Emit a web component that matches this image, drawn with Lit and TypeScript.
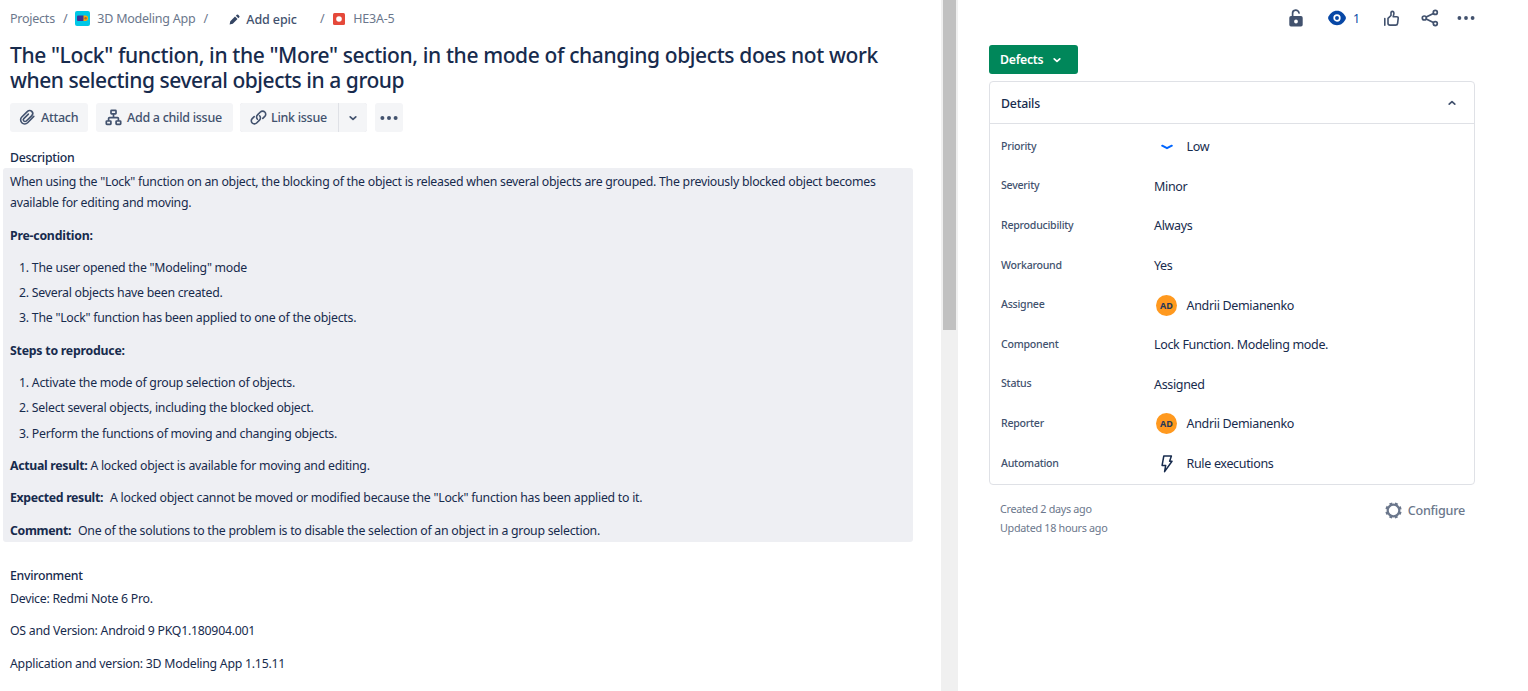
import { LitElement, html, css, svg } from "lit";
import { customElement } from "lit/decorators.js";

const chevronDown = html`<svg class="chev" viewBox="0 0 10 10"><path d="M2.2 3.8 5 6.4 7.8 3.8" /></svg>`;
const chevronUp = html`<svg class="chev" viewBox="0 0 10 10"><path d="M2.2 6.2 5 3.6 7.8 6.2" /></svg>`;
const dots = (r: number) => html`<svg width="18" height="6" viewBox="0 0 18 6" fill="currentColor">
  ${[2.4, 9, 15.6].map((x) => svg`<circle cx=${x} cy="3" r=${r} />`)}
</svg>`;

const avatar = html`<span class="avatar">AD</span>`;
const low = html`<svg width="12" height="6" viewBox="0 0 12 6" fill="none" stroke="#0065ff" stroke-width="2" stroke-linecap="round" stroke-linejoin="round"><path d="M1.2 1.7 6 4.2 10.8 1.7" /></svg>`;
const bolt = html`<svg width="14" height="20" viewBox="0 0 14 20" fill="none" stroke="#172b4d" stroke-width="1.5" stroke-linejoin="round"><path d="M3.8 2h7.6L9.6 7.3h2.4L4.6 17.6l1.1-6.2H2.1z" /></svg>`;

const rows: { label: string; icon?: unknown; value: string }[] = [
  { label: "Priority", icon: low, value: "Low" },
  { label: "Severity", value: "Minor" },
  { label: "Reproducibility", value: "Always" },
  { label: "Workaround", value: "Yes" },
  { label: "Assignee", icon: avatar, value: "Andrii Demianenko" },
  { label: "Component", value: "Lock Function. Modeling mode." },
  { label: "Status", value: "Assigned" },
  { label: "Reporter", icon: avatar, value: "Andrii Demianenko" },
  { label: "Automation", icon: bolt, value: "Rule executions" },
];

@customElement("app-root")
export class AppRoot extends LitElement {
  static styles = css`
    :host {
      display: flex;
      width: 1528px;
      height: 691px;
      overflow: hidden;
      background: #fff;
      color: #172b4d;
      font-family: "Noto Sans", "Open Sans", sans-serif;
      font-size: 12.3px;
      letter-spacing: -0.25px;
      white-space: nowrap;
    }
    * { box-sizing: border-box; }
    svg { display: block; flex: none; }
    .chev { width: 10px; height: 10px; fill: none; stroke: currentColor; stroke-width: 1.7; stroke-linecap: round; stroke-linejoin: round; }
    .main { width: 941px; padding-left: 10px; flex: none; }
    .crumbs { display: flex; align-items: center; height: 37px; color: #6b778c; font-size: 12.5px; letter-spacing: -0.24px; }
    .sep { margin: 0 8px 0 8px; }
    .app { margin: 0 7px 0 0; }
    .epic { display: flex; align-items: center; gap: 6px; margin: 2px 15px 0 13.5px; color: #42526e; font-weight: 500; letter-spacing: -0.1px; }
    .bug { margin: 0 8px 0 1px; }
    h1 { margin: 6px 0 10px; font-size: 21px; line-height: 25px; font-weight: 500; letter-spacing: -0.38px; }
    h1 .tail { letter-spacing: -0.46px; }
    .actions { display: flex; height: 29px; gap: 8px; color: #42526e; font-weight: 500; font-size: 12.5px; letter-spacing: -0.28px; }
    .btn { display: flex; align-items: center; gap: 5px; padding-left: 9px; border-radius: 3px; background: #f4f5f7; }
    .attach { width: 78px; }
    .child { width: 137px; }
    .split { display: flex; width: 127px; margin-left: -1px; background: #dfe1e6; border-radius: 3px; }
    .link { width: 98px; padding-left: 10px; gap: 4px; border-radius: 3px 0 0 3px; }
    .drop { width: 28px; margin-left: 1px; justify-content: center; padding: 0; border-radius: 0 3px 3px 0; }
    .more { width: 28px; padding: 0; justify-content: center; }
    h2 { margin: 15px 0 0; font-size: 12.3px; line-height: 21px; font-weight: 500; letter-spacing: -0.28px; }
    .desc { width: 910px; height: 374px; margin-left: -7px; padding: 3.3px 7px 0; background: #eeeff3; border-radius: 3px; line-height: 21px; }
    .desc p, .desc ol { margin: 0 0 11.4px; }
    .desc ol { padding: 0 0 0 9px; list-style: none; }
    .desc li { display: flex; gap: 3px; margin-bottom: 4.2px; }
    .desc li:last-child { margin-bottom: 0; }
    .desc b { font-weight: 700; letter-spacing: -0.22px; }
    .desc .wide { margin-right: 4px; letter-spacing: -0.33px; }
    .desc .actual { letter-spacing: -0.3px; }
    .env { margin-top: 23px; }
    .line { margin: 2px 0 11.4px; line-height: 21px; }
    .line + .line { margin-top: 0; }
    .track { width: 17px; flex: none; padding: 0 2px; background: #f0f0f0; }
    .thumb { height: 330px; background: #c1c1c1; }
    .side { width: 517px; padding-left: 31px; }
    .tools { display: flex; align-items: center; height: 37px; padding: 0 0 1px 298px; color: #42526e; }
    .watch { display: flex; align-items: center; gap: 7px; margin: 0 23px 0 23px; color: #0747a6; }
    .share { margin: 0 18px 0 21px; }
    .status { display: flex; align-items: center; gap: 9px; width: 89px; height: 29px; margin: 8px 0 7px; padding-left: 11px; border-radius: 3px; background: #00875a; color: #fff; font-weight: 600; font-size: 12.3px; }
    .card { width: 486px; height: 404px; border: 1px solid #dfe1e6; border-radius: 4px; }
    .head { display: flex; justify-content: space-between; align-items: center; height: 42px; padding: 1px 17px 0 11px; border-bottom: 1px solid #dfe1e6; font-weight: 500; letter-spacing: -0.2px; }
    .head .chev { color: #42526e; margin-bottom: 1px; }
    .rows { padding: 2.5px 0 0 11px; }
    .row { display: grid; grid-template-columns: 153px 1fr; align-items: center; height: 39.6px; }
    .label { padding-bottom: 0.8px; color: #42526e; font-size: 10.6px; font-weight: 500; letter-spacing: -0.25px; }
    .value { display: flex; align-items: center; padding-top: 1px; font-size: 12.5px; letter-spacing: -0.33px; }
    .ic { display: flex; justify-content: center; width: 25px; margin-right: 7.5px; }
    .avatar { display: flex; align-items: center; justify-content: center; width: 21px; height: 21px; border-radius: 50%; background: #ff991f; color: #253858; font-size: 9px; font-weight: 700; letter-spacing: 0; }
    .foot { display: flex; justify-content: space-between; width: 476px; padding: 14px 0 0 11px; color: #6b778c; font-size: 10.8px; line-height: 19px; letter-spacing: -0.3px; }
    .config { display: flex; align-items: center; gap: 6px; height: 23px; font-size: 12.6px; font-weight: 500; letter-spacing: -0.25px; }
  `;

  render() {
    return html`
      <main class="main">
        <nav class="crumbs">
          <span>Projects</span><span class="sep">/</span>
          <svg class="app" width="15" height="15" viewBox="0 0 15 15">
            <rect width="15" height="15" rx="2" fill="#00c7e6" />
            <rect x="2" y="4.5" width="7" height="5.5" rx="1" fill="#403294" />
            <path d="M8.5 4.500h1.800a2.750 2.750 0 0 1 0 5.500H8.500z" fill="#ffab00" />
            <circle cx="10.6" cy="7.2" r="1.2" fill="#a5673f" />
          </svg>
          <span>3D Modeling App</span><span class="sep">/</span>
          <span class="epic">
            <svg width="11" height="11" viewBox="0 0 11 11" fill="#344563"><path d="M.6 10.4 1.3 7.2 6 2.5 8.5 5 3.8 9.7zM6.9 1.7 7.8.8a1 1 0 0 1 1.4 0l1.1 1.1a1 1 0 0 1 0 1.4l-.9.9z" /></svg>
            <span>Add epic</span>
          </span>
          <span class="sep">/</span>
          <svg class="bug" width="12" height="12" viewBox="0 0 12 12"><rect width="12" height="12" rx="1.5" fill="#e5493a" /><circle cx="6" cy="6" r="2.8" fill="#fff" /></svg>
          <span>HE3A-5</span>
        </nav>
        <h1>The "Lock" function, in the "More" section, in the mode of changing objects does not work<br /><span class="tail">when selecting several objects in a group</span></h1>
        <div class="actions">
          <div class="btn attach">
            <svg width="17" height="17" viewBox="0 0 17 17" fill="none" stroke="currentColor" stroke-width="1.6" stroke-linecap="round"><path d="M14.8 7.4 8.6 13.7a4 4 0 0 1-5.8 0 4 4 0 0 1 0-5.7L8.5 2.4a3 3 0 0 1 4.3 0 3 3 0 0 1 0 4.2L7.3 12a1.7 1.7 0 0 1-2.5 0 1.7 1.7 0 0 1 0-2.4l4.6-4.5" /></svg>
            <span>Attach</span>
          </div>
          <div class="btn child">
            <svg width="17" height="17" viewBox="0 0 17 17" fill="none" stroke="currentColor" stroke-width="1.7"><rect x="6" y="1.3" width="5" height="3.6" rx=".6" /><rect x="1.3" y="12" width="4.6" height="3.4" rx=".6" /><rect x="11.1" y="12" width="4.6" height="3.4" rx=".6" /><path d="M8.5 5v3.7M3.6 12V9.6q0-.9.9-.9h8q.9 0 .9.9V12" /></svg>
            <span>Add a child issue</span>
          </div>
          <div class="split">
            <div class="btn link">
              <svg width="17" height="17" viewBox="0 0 17 17" fill="none" stroke="currentColor" stroke-width="1.6" stroke-linecap="round"><path d="M7.4 10.2a3 3 0 0 1 .1-4.3l2.9-2.9a3.1 3.1 0 0 1 4.4 0 3.1 3.1 0 0 1 0 4.4L12.8 9.4M9.6 6.8a3 3 0 0 1-.1 4.3L6.6 14a3.1 3.1 0 0 1-4.4 0 3.1 3.1 0 0 1 0-4.4L4.2 7.6" /></svg>
              <span>Link issue</span>
            </div>
            <div class="btn drop">${chevronDown}</div>
          </div>
          <div class="btn more">${dots(2)}</div>
        </div>
        <h2>Description</h2>
        <section class="desc">
          <p>When using the "Lock" function on an object, the blocking of the object is released when several objects are grouped. The previously blocked object becomes<br />available for editing and moving.</p>
          <p><b>Pre-condition:</b></p>
          <ol>
            <li><span>1.</span><span>The user opened the "Modeling" mode</span></li>
            <li><span>2.</span><span>Several objects have been created.</span></li>
            <li><span>3.</span><span>The "Lock" function has been applied to one of the objects.</span></li>
          </ol>
          <p><b>Steps to reproduce:</b></p>
          <ol>
            <li><span>1.</span><span>Activate the mode of group selection of objects.</span></li>
            <li><span>2.</span><span>Select several objects, including the blocked object.</span></li>
            <li><span>3.</span><span>Perform the functions of moving and changing objects.</span></li>
          </ol>
          <p><b class="actual">Actual result:</b> A locked object is available for moving and editing.</p>
          <p><b class="wide">Expected result:</b> A locked object cannot be moved or modified because the "Lock" function has been applied to it.</p>
          <p><b class="wide">Comment:</b> One of the solutions to the problem is to disable the selection of an object in a group selection.</p>
        </section>
        <h2 class="env">Environment</h2>
        <p class="line">Device: Redmi Note 6 Pro.</p>
        <p class="line">OS and Version: Android 9 PKQ1.180904.001</p>
        <p class="line">Application and version: 3D Modeling App 1.15.11</p>
      </main>
      <div class="track"><div class="thumb"></div></div>
      <aside class="side">
        <div class="tools">
          <svg width="18" height="19" viewBox="0 0 18 19"><path d="M5.6 8V4.600a3.200 3.200 0 0 1 6.400-.600" fill="none" stroke="currentColor" stroke-width="1.7" stroke-linecap="round" /><path fill-rule="evenodd" fill="currentColor" d="M4 7h10q1.700 0 1.700 1.700v7.100q0 1.700-1.700 1.700H4q-1.700 0-1.700-1.700V8.700Q2.300 7 4 7zM9 10.600a1.900 1.900 0 1 0 0 3.800 1.900 1.900 0 0 0 0-3.800z" /></svg>
          <span class="watch">
            <svg width="18" height="16" viewBox="0 0 18 16"><path d="M0 8C1.500 3.400 5 .800 9 .800S16.500 3.400 18 8c-1.500 4.600-5 7.200-9 7.200S1.500 12.600 0 8z" fill="currentColor" /><circle cx="9" cy="8" r="2.8" fill="none" stroke="#fff" stroke-width="1.7" /></svg>
            <span>1</span>
          </span>
          <svg width="17" height="17" viewBox="0 0 17 17" fill="none" stroke="currentColor" stroke-width="1.6" stroke-linejoin="round" stroke-linecap="round"><path d="M1.8 8.5v6.7M5 8.4 8 5.500V3q0-1.600 1.300-1.600 1.600 0 1.600 2.200L10.200 6.700h3.500q1.700 0 1.500 1.600l-.6 5q-.2 1.800-2 1.800H7Q5 15.100 5 13.300z" /></svg>
          <svg class="share" width="18" height="18" viewBox="0 0 18 18" fill="none" stroke="currentColor" stroke-width="1.7"><circle cx="3.3" cy="9" r="2" /><circle cx="14.3" cy="3.4" r="2" /><circle cx="14.3" cy="14.6" r="2" /><path d="M5.200 8 12.400 4.400M5.200 10l7.200 3.600" /></svg>
          ${dots(1.9)}
        </div>
        <div class="status"><span>Defects</span>${chevronDown}</div>
        <section class="card">
          <div class="head"><span>Details</span>${chevronUp}</div>
          <div class="rows">
            ${rows.map((r) => html`<div class="row">
              <span class="label">${r.label}</span>
              <span class="value">${r.icon ? html`<span class="ic">${r.icon}</span>` : null}<span>${r.value}</span></span>
            </div>`)}
          </div>
        </section>
        <div class="foot">
          <div>Created 2 days ago<br />Updated 18 hours ago</div>
          <div class="config">
            <svg width="17" height="17" viewBox="0 0 17 17" fill="none" stroke="currentColor"><circle cx="8.5" cy="8.5" r="5.8" stroke-width="2.2" /><circle cx="8.5" cy="8.5" r="7.2" stroke-width="2" stroke-dasharray="2.9 2.755" stroke-dashoffset="-1.3" /></svg>
            <span>Configure</span>
          </div>
        </div>
      </aside>
    `;
  }
}
